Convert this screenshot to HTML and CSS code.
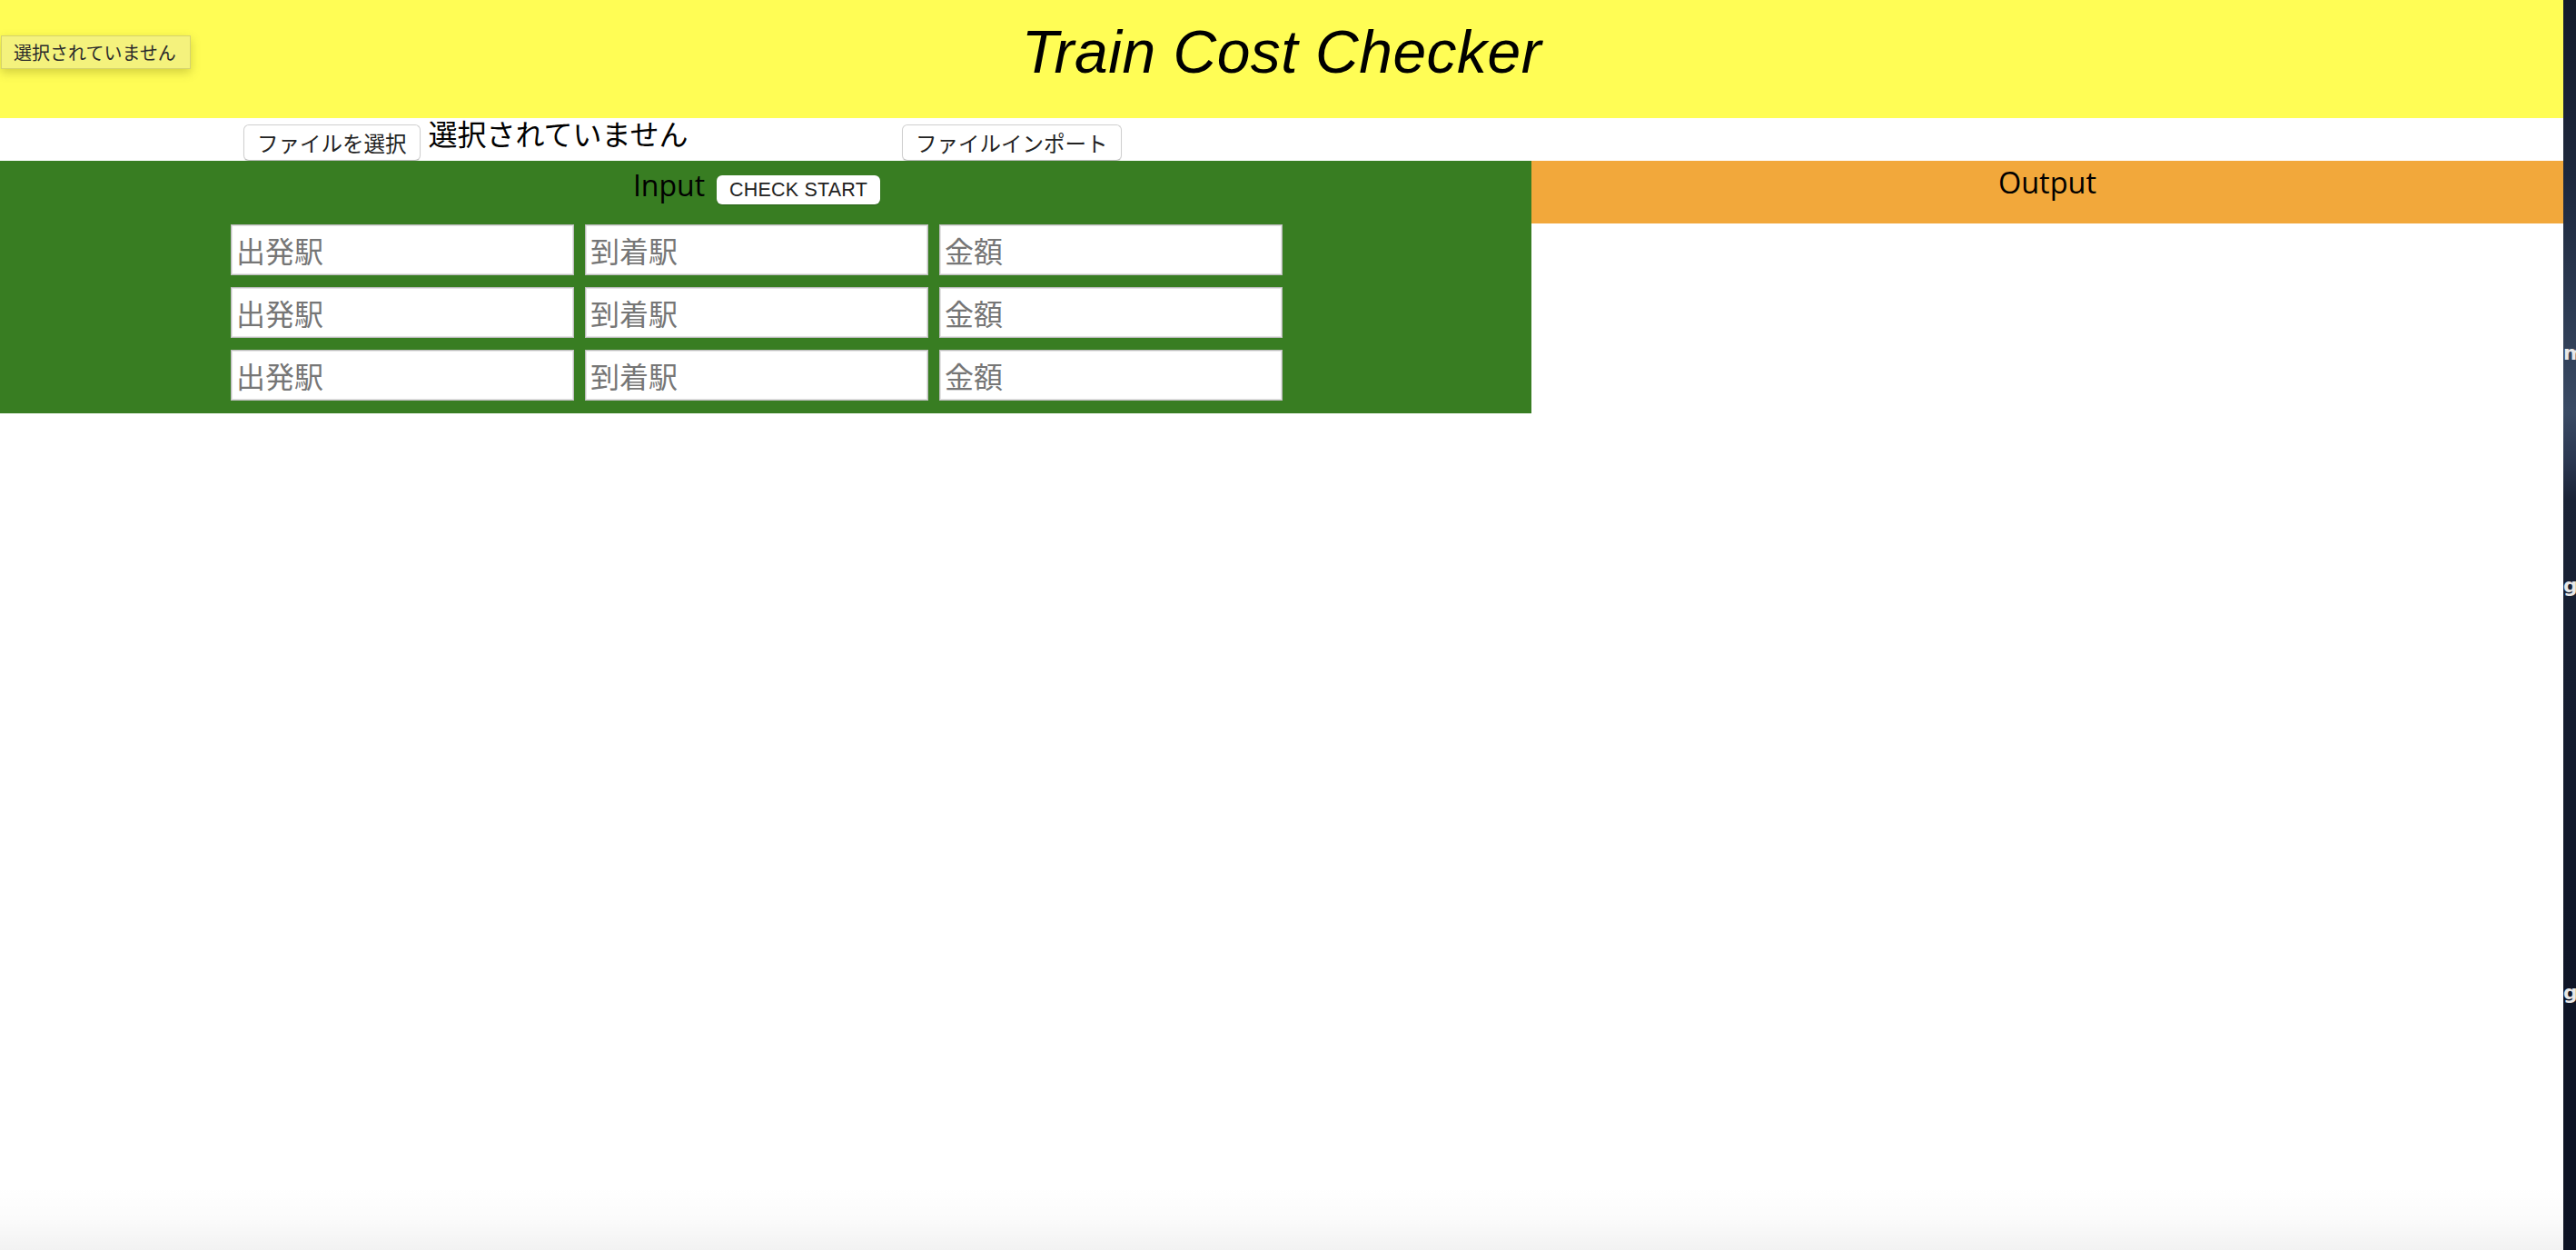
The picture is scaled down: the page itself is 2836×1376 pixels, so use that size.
FILE: index.html
```html
<!DOCTYPE html>
<html lang="ja">
<head>
<meta charset="utf-8">
<title>Train Cost Checker</title>
<link rel="stylesheet" href="styles.css">
</head>
<body>
<div class="page">
  <header class="header">
    <h1 class="title">Train Cost Checker</h1>
    <div class="tooltip">選択されていません</div>
  </header>
  <div class="toolbar">
    <div class="file-input">
      <button class="btn" type="button">ファイルを選択</button>
      <span class="file-name">選択されていません</span>
    </div>
    <button class="btn" type="button">ファイルインポート</button>
  </div>
  <main class="main">
    <section class="input-panel">
      <div class="panel-head">
        <span class="panel-title">Input</span>
        <button class="check-btn" type="button">CHECK START</button>
      </div>
      <div class="rows">
        <div class="row">
          <input class="field" type="text" placeholder="出発駅">
          <input class="field" type="text" placeholder="到着駅">
          <input class="field" type="text" placeholder="金額">
        </div>
        <div class="row">
          <input class="field" type="text" placeholder="出発駅">
          <input class="field" type="text" placeholder="到着駅">
          <input class="field" type="text" placeholder="金額">
        </div>
        <div class="row">
          <input class="field" type="text" placeholder="出発駅">
          <input class="field" type="text" placeholder="到着駅">
          <input class="field" type="text" placeholder="金額">
        </div>
      </div>
    </section>
    <section class="output-panel">
      <div class="output-head">Output</div>
    </section>
  </main>
  <div class="bottom-shadow"></div>
</div>
<div class="desktop">
  <span class="label l1">m</span>
  <span class="label l2">g</span>
  <span class="label l3">g</span>
</div>
</body>
</html>
```

FILE: styles.css
```css
html, body {
  margin: 0;
  padding: 0;
  height: 100%;
}

body {
  display: flex;
  background: #ffffff;
  font-family: "Noto Sans CJK JP", "Liberation Sans", sans-serif;
  overflow: hidden;
}

.page {
  position: relative;
  width: 2822px;
  height: 1376px;
  flex: none;
  background: #ffffff;
  overflow: hidden;
}

/* header */
.header {
  position: relative;
  height: 130px;
  background: #fffd55;
  box-sizing: border-box;
  padding-top: 20px;
}

.title {
  margin: 0;
  text-align: center;
  font-family: "Liberation Sans", Arial, sans-serif;
  font-style: italic;
  font-weight: normal;
  font-size: 66px;
  line-height: 74px;
  letter-spacing: 0.5px;
  color: #000;
}

.tooltip {
  position: absolute;
  left: 1px;
  top: 39px;
  width: 209px;
  height: 37px;
  box-sizing: border-box;
  padding-left: 13px;
  background: #f4f27d;
  border: 1px solid rgba(120, 120, 60, 0.25);
  box-shadow: 0 4px 10px rgba(80, 80, 0, 0.25);
  font-family: "Noto Sans CJK JP", sans-serif;
  font-size: 20px;
  line-height: 35px;
  color: #2b2b2b;
  white-space: nowrap;
}

/* toolbar */
.toolbar {
  height: 47px;
  display: flex;
  align-items: flex-start;
  padding-left: 268px;
  box-sizing: border-box;
  background: #fff;
}

.file-input {
  display: flex;
  align-items: flex-start;
  width: 725px;
  flex: none;
}

.btn {
  margin: 7px 0 0 0;
  height: 40px;
  padding: 0 14px;
  box-sizing: border-box;
  background: #ffffff;
  border: 1px solid #cfcfcf;
  border-bottom-color: #bdbdbd;
  border-radius: 6px;
  box-shadow: 0 1px 1px rgba(0, 0, 0, 0.08);
  font-family: "Noto Sans CJK JP", sans-serif;
  font-size: 23.5px;
  line-height: 36px;
  color: #222;
  white-space: nowrap;
}

.file-name {
  margin-left: 9px;
  font-family: "Noto Sans CJK JP", sans-serif;
  font-size: 32px;
  line-height: 32px;
  color: #000;
  white-space: nowrap;
}

/* main */
.main {
  display: flex;
  align-items: flex-start;
}

.input-panel {
  width: 1686px;
  flex: none;
  background: #387d22;
  padding-right: 20px;
  padding-bottom: 14px;
  box-sizing: border-box;
}

.panel-head {
  height: 70px;
  box-sizing: border-box;
  padding-top: 11px;
  display: flex;
  justify-content: center;
  align-items: baseline;
  gap: 13px;
}

.panel-title {
  font-family: "Open Sans", sans-serif;
  font-size: 32px;
  line-height: 32px;
  color: #000;
}

.check-btn {
  height: 32px;
  width: 180px;
  padding: 0;
  box-sizing: border-box;
  background: #ffffff;
  border: none;
  border-radius: 6px;
  box-shadow: 0 1px 1px rgba(0, 0, 0, 0.2);
  font-family: "Liberation Sans", Arial, sans-serif;
  font-size: 21.5px;
  line-height: 32px;
  color: #222;
  letter-spacing: 0.2px;
}

.rows {
  display: flex;
  flex-direction: column;
  align-items: center;
  gap: 13px;
}

.row {
  display: flex;
  gap: 12px;
}

.field {
  width: 378px;
  height: 56px;
  margin: 0;
  box-sizing: border-box;
  padding: 0 5px;
  background: #ffffff;
  border: 1px solid #bdbdbd;
  box-shadow: inset 0 0 0 1px #e4e4e4;
  border-radius: 0;
  font-family: "Noto Sans CJK JP", sans-serif;
  font-size: 32px;
  color: #000;
  outline: none;
}

.field::placeholder {
  color: #767676;
}

.output-panel {
  flex: 1;
}

.output-head {
  height: 69px;
  box-sizing: border-box;
  padding-top: 8px;
  background: #f2a83b;
  text-align: center;
  font-family: "Open Sans", sans-serif;
  font-size: 32.5px;
  line-height: 32px;
  color: #000;
}

.bottom-shadow {
  position: absolute;
  left: 0;
  right: 0;
  bottom: 0;
  height: 70px;
  background: linear-gradient(to bottom, rgba(0, 0, 0, 0) 0%, rgba(0, 0, 0, 0.015) 50%, rgba(0, 0, 0, 0.05) 100%);
  pointer-events: none;
}

/* desktop strip */
.desktop {
  position: relative;
  flex: 1;
  height: 1376px;
  overflow: hidden;
  background: linear-gradient(to bottom,
    #141b2b 0%,
    #1e283d 14%,
    #2b3951 24%,
    #3a4a64 33%,
    #2a3650 37%,
    #1a2336 40%,
    #151d30 55%,
    #0f1628 75%,
    #0c1223 100%);
}

.label {
  position: absolute;
  left: 0;
  font-family: "DejaVu Sans", sans-serif;
  font-weight: bold;
  font-size: 22px;
  line-height: 22px;
  color: #e8e8e8;
}

.l1 { top: 378px; }
.l2 { top: 634px; }
.l3 { top: 1082px; }
```
